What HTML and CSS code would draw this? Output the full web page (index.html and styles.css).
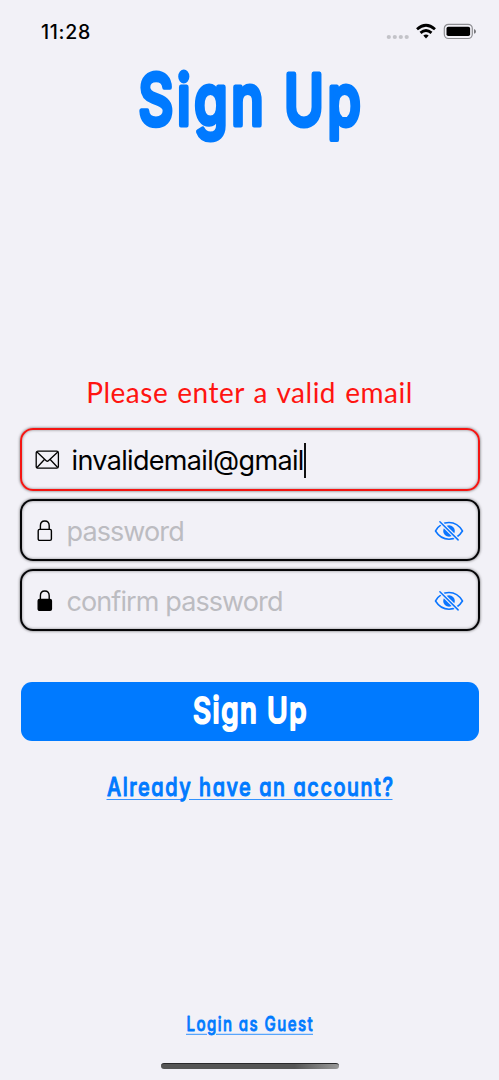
FILE: index.html
```html
<!DOCTYPE html>
<html lang="en">
<head>
<meta charset="utf-8">
<title>Sign Up</title>
<link rel="stylesheet" href="styles.css">
</head>
<body>
<main class="screen">
  <header class="status">
    <span class="time">11:28</span>
    <svg class="status-icons" width="92" height="20" viewBox="0 0 92 20">
      <g fill="#c3c3c8"><circle cx="3.8" cy="14" r="2.1"/><circle cx="9.8" cy="14" r="2.1"/><circle cx="15.8" cy="14" r="2.1"/><circle cx="21.7" cy="14" r="2.1"/></g>
      <g fill="none" stroke="#000" stroke-width="2.8"><path d="M32 6.2Q41 -1.6 50 6.2"/><path d="M35.5 9.9Q41 5.1 46.5 9.9"/></g>
      <path d="M38.3 12.5Q41 10.3 43.7 12.5L41 15.4Z"/>
      <rect x="59.3" y="1.3" width="28" height="14.2" rx="4.2" fill="none" stroke="#8e8e92" stroke-width="1.2"/>
      <rect x="61.5" y="3.7" width="23.6" height="9.4" rx="1.8"/>
      <path d="M89 6Q91 6.8 91 8.4T89 10.8Z" fill="#77777b"/>
    </svg>
  </header>

  <h1 class="title">
    <svg class="marker" width="240" height="84" viewBox="130 64 240 84">
      <text font-size="70" stroke-width="5" x="138.5" y="125" textLength="226" lengthAdjust="spacingAndGlyphs">Sign Up</text>
    </svg>
  </h1>

  <p class="error">Please enter a valid email</p>

  <form class="fields">
    <div class="field invalid">
      <svg class="mail" width="25" height="20" viewBox="0 0 25 20" fill="none" stroke="#000" stroke-width="1.3"><rect x="1.2" y="1.2" width="22.2" height="17" rx="1.8"/><path d="M2 2L11.2 10.7Q12.3 11.7 13.4 10.7L22.8 2M2 17.5L9.4 9.5M22.7 17.5L15.2 9.5"/></svg>
      <span class="value">invalidemail@gmail</span><i class="caret"></i>
    </div>
    <div class="field">
      <svg class="lock" width="16" height="22" viewBox="0 0 16 22" fill="none" stroke="#000" stroke-width="1.4"><rect x="1.2" y="9.4" width="13.2" height="11" rx="1.4"/><path d="M3.4 9.4V5.8Q3.4 1 7.8 1T12.2 5.8V9.4"/></svg>
      <span class="placeholder">password</span>
      <svg class="eye" width="30" height="22" viewBox="0 0 30 22"><use href="#eye-off"/></svg>
    </div>
    <div class="field">
      <svg class="lock" width="16" height="22" viewBox="0 0 16 22" fill="none" stroke="#000" stroke-width="1.4"><rect x="1.2" y="9.4" width="13.2" height="11" rx="1.4" fill="#000"/><path d="M3.4 9.4V5.8Q3.4 1 7.8 1T12.2 5.8V9.4"/></svg>
      <span class="placeholder confirm">confirm password</span>
      <svg class="eye" width="30" height="22" viewBox="0 0 30 22">
        <g id="eye-off" fill="none" stroke="#0a75ff" stroke-width="1.5">
          <path d="M1.5 11Q6.5 2.6 15 2.6T28.5 11Q23.5 19.2 15 19.2T1.5 11Z"/>
          <circle cx="15" cy="11" r="5.8" fill="#0a75ff" stroke="none"/>
          <path d="M5.6 1.4L24.4 20.2" stroke="#f2f1f7" stroke-width="3.8"/>
          <path d="M5.9 1.8L24.1 19.9" stroke-width="1.5" stroke-linecap="round"/>
        </g>
      </svg>
    </div>
  </form>

  <button class="submit" type="button">
    <svg class="marker" width="130" height="46" viewBox="185 690 130 46">
      <text font-size="36" stroke-width="2.2" x="193" y="724" textLength="115" lengthAdjust="spacingAndGlyphs">Sign Up</text>
    </svg>
  </button>

  <a class="account">
    <svg class="marker regular" width="290" height="32" viewBox="105 772 290 32">
      <text font-size="25" stroke-width="1" x="107" y="796" textLength="287.5" lengthAdjust="spacingAndGlyphs">Already have an account?</text>
      <path d="M106.5 799.5H182M189 799.5H392.5" stroke-width=".8"/>
    </svg>
  </a>

  <a class="guest">
    <svg class="marker regular" width="130" height="26" viewBox="185 1012 130 26">
      <text font-size="20" stroke-width=".8" x="186.5" y="1031" textLength="127.5" lengthAdjust="spacingAndGlyphs">Login as Guest</text>
      <path d="M186 1034.3H207M216 1034.3H313" stroke-width=".8"/>
    </svg>
  </a>
  <div class="home"></div>
</main>
</body>
</html>
```

FILE: styles.css
```css
* { box-sizing: border-box; }
body { margin: 0; background: #f2f1f7; font-family: Inter, sans-serif; }
.screen { width: 499px; height: 1080px; display: flex; flex-direction: column; align-items: center; overflow: hidden; }
.status { width: 100%; height: 64px; padding: 20px 22px 0 41px; display: flex; justify-content: space-between; align-items: flex-start; }
.time { font-size: 19.5px; line-height: 24px; font-weight: 500; letter-spacing: .7px; color: #000; }
.status-icons { margin-top: 3px; }
.title { margin: 0; height: 84px; }
.marker { display: block; fill: #007aff; stroke: #007aff; stroke-linejoin: round; font-family: Inter, "Noto Sans", sans-serif; font-weight: 500; letter-spacing: .15em; word-spacing: -.06em; font-feature-settings: "cv11"; overflow: visible; }
.marker.regular { letter-spacing: .12em; word-spacing: 0; }
.error { margin: 227px 0 0; height: 36px; line-height: 34px; font-family: Lato, "Noto Sans", sans-serif; font-size: 28px; font-weight: 400; letter-spacing: .5px; word-spacing: 1.5px; color: #ff1411; white-space: nowrap; }
.fields { width: 460px; margin-top: 17px; display: flex; flex-direction: column; gap: 8px; }
.field { height: 62px; padding: 2px 15px 0; display: flex; align-items: center; border: 2px solid #050507; border-radius: 13px; box-shadow: 0 0 3px rgba(0,0,0,.6), inset 0 0 3px rgba(0,0,0,.45); font-size: 27px; white-space: nowrap; }
.field.invalid { height: 63px; padding-top: 1px; border-color: #f41512; }
.value { margin-left: 12px; letter-spacing: -.66px; color: #000; }
.caret { width: 2px; height: 35px; background: #111; }
.placeholder { margin-left: 14px; color: #bcbcc1; letter-spacing: -.9px; }
.mail { margin-left: -2px; }
.eye { margin-left: auto; margin-right: -1px; }
.submit { width: 458px; height: 59px; margin-top: 51px; padding: 0; border: 0; border-radius: 11px; background: #007aff; display: grid; place-items: center; }
.submit .marker { fill: #fff; stroke: #fff; }
.account { margin-top: 31px; }
.guest { margin-top: 208px; }
.home { width: 178px; height: 6px; margin-top: 25px; border-radius: 3px; background: linear-gradient(90deg, #555 0 75%, #999); border-top: 1px solid #29292b; }
```
